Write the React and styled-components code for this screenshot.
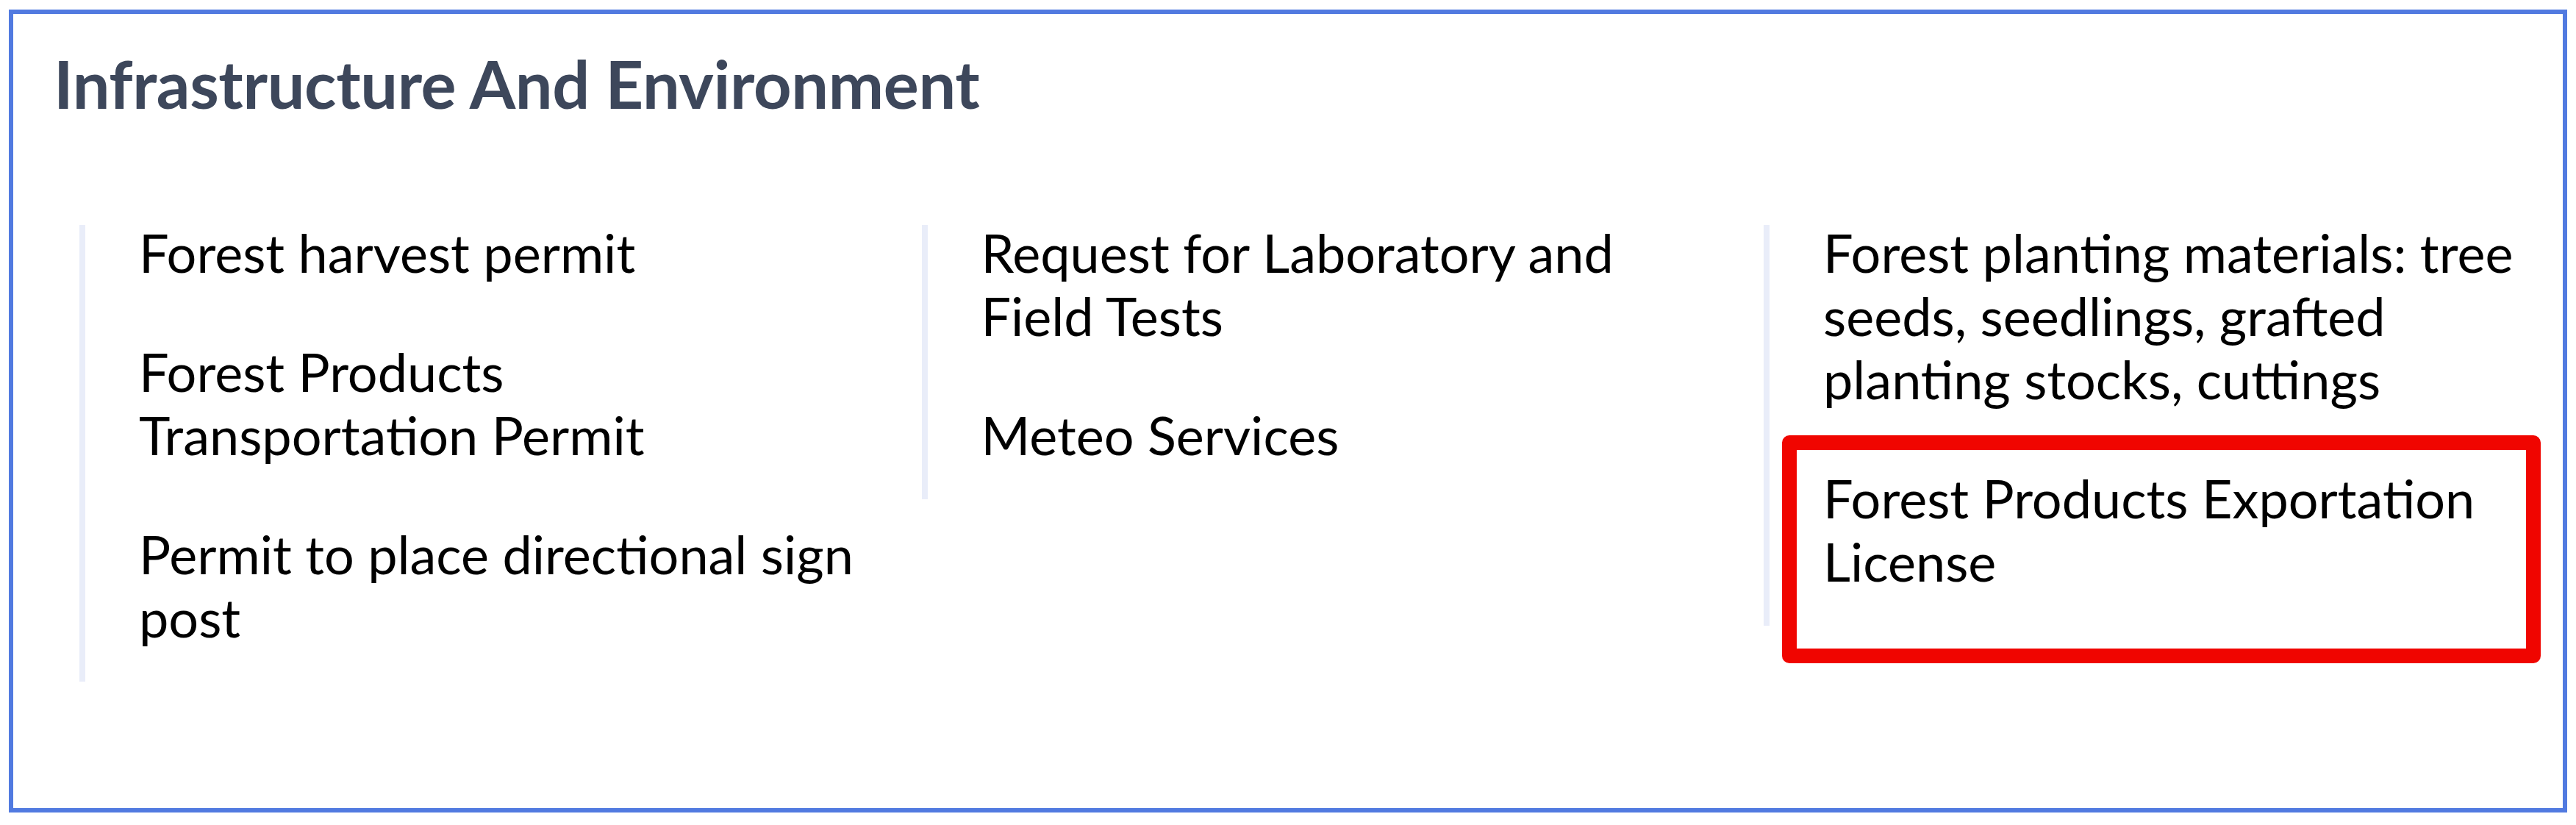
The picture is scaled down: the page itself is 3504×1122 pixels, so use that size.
import React from "react";
import styled, { createGlobalStyle } from "styled-components";

const Global = createGlobalStyle`
  html, body { margin: 0; padding: 0; background: #ffffff; }
  body { font-family: Lato, "Noto Sans", sans-serif; }
  * { box-sizing: border-box; }
`;

const Page = styled.div`
  padding: 13px 12px 17px 12px;
`;

const Frame = styled.section`
  height: 1092px;
  border: 6.5px solid #517ae0;
  padding-top: 48.5px;
`;

const Heading = styled.h2`
  margin: 0;
  padding-left: 55px;
  font-family: Lato, "Noto Sans", sans-serif;
  font-size: 90px;
  font-weight: 700;
  line-height: 1;
  letter-spacing: -0.35px;
  color: #3d475b;
`;

const Columns = styled.div`
  display: grid;
  grid-template-columns: repeat(3, 1056px);
  column-gap: 89.5px;
  align-items: start;
  margin-top: 148px;
  padding-left: 90px;
`;

const Column = styled.ul`
  list-style: none;
  margin: 0;
  padding: 0 0 45px 73px;
  border-left: 8px solid #e9edf9;
`;

const Items = styled.div`
  display: flex;
  flex-direction: column;
  gap: 76px;
  margin-top: -6px;
`;

const Item = styled.li`
  position: relative;
  font-size: 72px;
  line-height: 86px;
  color: #000000;
  white-space: pre-line;

  ${(p) =>
    p.$marked &&
    `
    &::after {
      content: "";
      position: absolute;
      left: -56px;
      top: -42px;
      right: -1px;
      bottom: -96px;
      border: 20px solid #f00500;
      border-radius: 10px;
      pointer-events: none;
    }
  `}
`;

const columns = [
  [
    { text: "Forest harvest permit" },
    { text: "Forest Products\nTransportation Permit" },
    { text: "Permit to place directional sign post" },
  ],
  [
    { text: "Request for Laboratory and Field Tests" },
    { text: "Meteo Services" },
  ],
  [
    { text: "Forest planting materials: tree seeds, seedlings, grafted planting stocks, cuttings" },
    { text: "Forest Products Exportation License", marked: true },
  ],
];

export default function App() {
  return (
    <>
      <Global />
      <Page>
        <Frame>
          <Heading>Infrastructure And Environment</Heading>
          <Columns>
            {columns.map((col, i) => (
              <Column key={i}>
                <Items>
                  {col.map((it) => (
                    <Item key={it.text} $marked={it.marked}>
                      {it.text}
                    </Item>
                  ))}
                </Items>
              </Column>
            ))}
          </Columns>
        </Frame>
      </Page>
    </>
  );
}
